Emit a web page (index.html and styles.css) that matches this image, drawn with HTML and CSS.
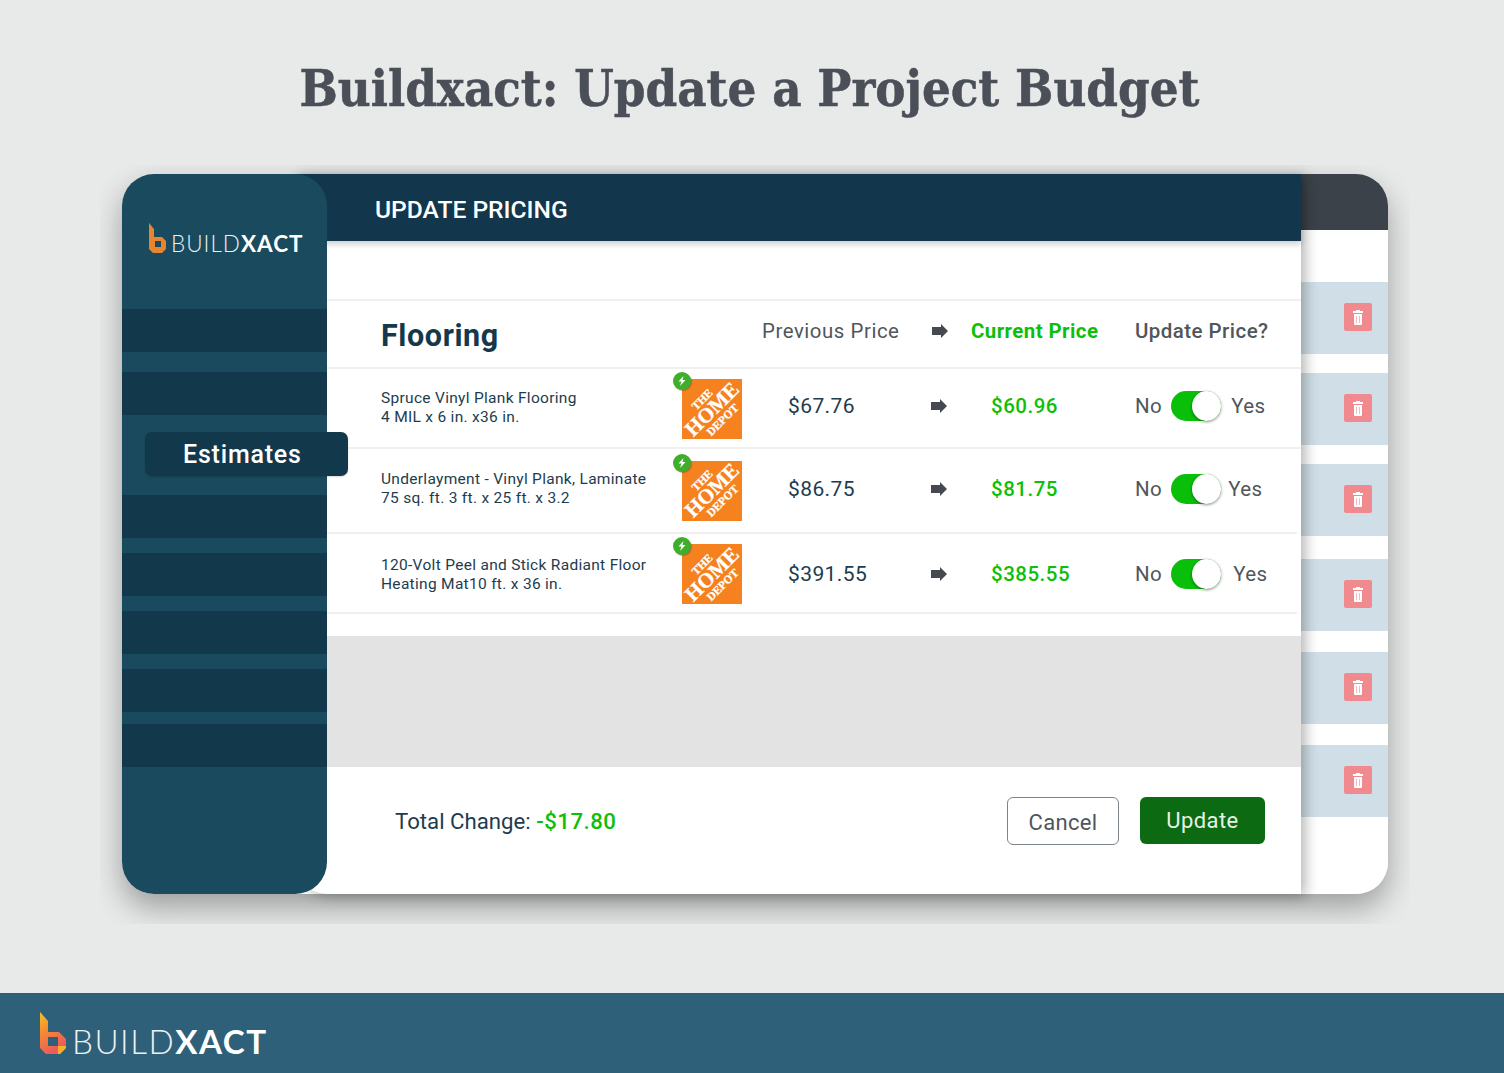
FILE: index.html
```html
<!DOCTYPE html>
<html lang="en">
<head>
	<meta charset="UTF-8">
	<title>Buildxact: Update a Project Budget</title>
	<link rel="stylesheet" href="styles.css">
</head>
<body>
	<h1 class="title">Buildxact: Update a Project Budget</h1>

	<div class="stage">
		<div class="app">
			<aside class="side">
				<div class="side_logo">
					<svg class="side_mark" width="19" height="31" viewBox="0 0 19 31"><path d="M1 0l5 6v8h8l4 4v8l-4 4H5l-4-4z" fill="#e8832f"/><rect x="7" y="18" width="6" height="6" fill="#1a4a5e"/></svg>
					<span class="word">BUILD<b>XACT</b></span>
				</div>
				<div class="side_bars">
					<div class="bar"></div>
					<div class="bar"></div>
					<div class="bar"></div>
					<div class="bar"></div>
					<div class="bar"></div>
					<div class="bar"></div>
					<div class="bar"></div>
					<div class="bar"></div>
				</div>
				<div class="pill">Estimates</div>
			</aside>

			<main class="main">
				<header class="main_top">UPDATE PRICING</header>
				<div class="main_gap"></div>

				<div class="row row_head">
					<h2 class="cat">Flooring</h2>
					<div class="col_price">Previous Price</div>
					<div class="col_arrow"><svg width="16" height="14" viewBox="0 0 16 14"><path d="M0 3h9V0l7 7-7 7v-3H0z" fill="#454a50"/></svg></div>
					<div class="col_now">Current Price</div>
					<div class="col_toggle">Update Price?</div>
				</div>

				<div class="row row_1">
					<p class="item">Spruce Vinyl Plank Flooring<br>4 MIL x 6 in. x36 in.</p>
					<div class="store">
						<div class="depot"><span>THE<br><em>HOME</em><br>DEPOT</span></div>
						<i class="bolt"><svg width="10" height="10" viewBox="0 0 10 10"><path d="M6.5 0L1.5 5.5h3L3 10l5.5-6h-3z" fill="#fff"/></svg></i>
					</div>
					<div class="col_price">$67.76</div>
					<div class="col_arrow"><svg width="16" height="14" viewBox="0 0 16 14"><path d="M0 3h9V0l7 7-7 7v-3H0z" fill="#454a50"/></svg></div>
					<div class="col_now">$60.96</div>
					<div class="col_toggle">No <span class="toggle"></span> <span class="yes">Yes</span></div>
				</div>

				<div class="row row_2">
					<p class="item">Underlayment - Vinyl Plank, Laminate<br>75 sq. ft. 3 ft. x 25 ft. x 3.2</p>
					<div class="store">
						<div class="depot"><span>THE<br><em>HOME</em><br>DEPOT</span></div>
						<i class="bolt"><svg width="10" height="10" viewBox="0 0 10 10"><path d="M6.5 0L1.5 5.5h3L3 10l5.5-6h-3z" fill="#fff"/></svg></i>
					</div>
					<div class="col_price">$86.75</div>
					<div class="col_arrow"><svg width="16" height="14" viewBox="0 0 16 14"><path d="M0 3h9V0l7 7-7 7v-3H0z" fill="#454a50"/></svg></div>
					<div class="col_now">$81.75</div>
					<div class="col_toggle">No <span class="toggle"></span> <span class="yes yes_near">Yes</span></div>
				</div>

				<div class="row row_3">
					<p class="item">120-Volt Peel and Stick Radiant Floor<br>Heating Mat10 ft. x 36 in.</p>
					<div class="store">
						<div class="depot"><span>THE<br><em>HOME</em><br>DEPOT</span></div>
						<i class="bolt"><svg width="10" height="10" viewBox="0 0 10 10"><path d="M6.5 0L1.5 5.5h3L3 10l5.5-6h-3z" fill="#fff"/></svg></i>
					</div>
					<div class="col_price">$391.55</div>
					<div class="col_arrow"><svg width="16" height="14" viewBox="0 0 16 14"><path d="M0 3h9V0l7 7-7 7v-3H0z" fill="#454a50"/></svg></div>
					<div class="col_now">$385.55</div>
					<div class="col_toggle">No <span class="toggle"></span> <span class="yes yes_far">Yes</span></div>
				</div>

				<div class="main_spacer"></div>
				<div class="main_grey"></div>

				<footer class="main_foot">
					<div class="total">Total Change: <span class="minus">-$17.80</span></div>
					<div class="btns">
						<button class="btn_cancel">Cancel</button>
						<button class="btn_update">Update</button>
					</div>
				</footer>
			</main>

			<div class="back">
				<div class="back_top"></div>
				<div class="back_rows">
					<div class="back_row"><span class="trash"><svg width="10" height="15" viewBox="0 0 10 15"><path d="M3 0h4v1h3v2H0V1h3zM1 4h8v10a1 1 0 0 1-1 1H2a1 1 0 0 1-1-1z" fill="#fff"/><path d="M3.5 6v7M6.5 6v7" stroke="#f6b9bc"/></svg></span></div>
					<div class="back_row"><span class="trash"><svg width="10" height="15" viewBox="0 0 10 15"><path d="M3 0h4v1h3v2H0V1h3zM1 4h8v10a1 1 0 0 1-1 1H2a1 1 0 0 1-1-1z" fill="#fff"/><path d="M3.5 6v7M6.5 6v7" stroke="#f6b9bc"/></svg></span></div>
					<div class="back_row"><span class="trash"><svg width="10" height="15" viewBox="0 0 10 15"><path d="M3 0h4v1h3v2H0V1h3zM1 4h8v10a1 1 0 0 1-1 1H2a1 1 0 0 1-1-1z" fill="#fff"/><path d="M3.5 6v7M6.5 6v7" stroke="#f6b9bc"/></svg></span></div>
					<div class="back_row"><span class="trash"><svg width="10" height="15" viewBox="0 0 10 15"><path d="M3 0h4v1h3v2H0V1h3zM1 4h8v10a1 1 0 0 1-1 1H2a1 1 0 0 1-1-1z" fill="#fff"/><path d="M3.5 6v7M6.5 6v7" stroke="#f6b9bc"/></svg></span></div>
					<div class="back_row"><span class="trash"><svg width="10" height="15" viewBox="0 0 10 15"><path d="M3 0h4v1h3v2H0V1h3zM1 4h8v10a1 1 0 0 1-1 1H2a1 1 0 0 1-1-1z" fill="#fff"/><path d="M3.5 6v7M6.5 6v7" stroke="#f6b9bc"/></svg></span></div>
					<div class="back_row"><span class="trash"><svg width="10" height="15" viewBox="0 0 10 15"><path d="M3 0h4v1h3v2H0V1h3zM1 4h8v10a1 1 0 0 1-1 1H2a1 1 0 0 1-1-1z" fill="#fff"/><path d="M3.5 6v7M6.5 6v7" stroke="#f6b9bc"/></svg></span></div>
				</div>
			</div>
		</div>
	</div>

	<footer class="page_foot">
		<svg class="foot_mark" width="27" height="43" viewBox="0 0 27 43">
			<defs><linearGradient id="gr" x1="0" y1="0" x2="0.4" y2="1"><stop offset="0" stop-color="#f6c21c"/><stop offset=".45" stop-color="#f58a36"/><stop offset="1" stop-color="#ec5a5a"/></linearGradient></defs>
			<path d="M0 0l8 9v11h11l7 7v9l-6 6H6l-6-6z" fill="url(#gr)"/>
			<path d="M18 34h8v2l-6 6h-2z" fill="#f5b12a"/>
			<rect x="8" y="25" width="10" height="9" fill="#2f607a"/>
		</svg>
		<span class="word foot_word">BUILD<b>XACT</b></span>
	</footer>
</body>
</html>
```

FILE: styles.css
```css
*{
	margin: 0;
	padding: 0;
	box-sizing: border-box;
}
body{
	width: 1504px;
	height: 1073px;
	overflow: hidden;
	background: #e8e9e9;
	font-family: Roboto, "Liberation Sans", sans-serif;
	display: flex;
	flex-direction: column;
}
.title{
	height: 165px;
	padding: 53px 5px 0 0;
	text-align: center;
	font-family: "DejaVu Serif Condensed", "DejaVu Serif", serif;
	font-size: 50.4px;
	line-height: 72px;
	font-weight: 700;
	color: #4a4f58;
	-webkit-text-stroke: .5px #4a4f58;
}
/* the shadow stops hard at the bottom in the picture, so clip it */
.stage{
	width: 1310px;
	height: 759px;
	margin-left: 100px;
	padding: 9px 22px 0;
	overflow: hidden;
}
.app{
	position: relative;
	display: flex;
	width: 1266px;
	height: 720px;
	border-radius: 32px;
	background: #fff;
	box-shadow: 0 14px 30px rgba(0,0,0,.32);
}

/* sidebar */
.side{
	flex: none;
	width: 205px;
	border-radius: 32px;
	background: #1a4a5e;
	position: relative;
	z-index: 2;
}
.side_logo{
	height: 135px;
	padding: 49px 0 0 26px;
	display: flex;
	align-items: flex-start;
	gap: 4px;
}
.word{
	font-family: Lato, "Open Sans", sans-serif;
	font-size: 22.5px;
	line-height: 24px;
	letter-spacing: 1px;
	color: #eef1f2;
	font-weight: 300;
	margin-top: 9px;
}
.word b{
	font-weight: 700;
	color: #fff;
}
.side_bars{
	display: flex;
	flex-direction: column;
}
.bar{
	height: 43px;
	background: #12384c;
	margin-bottom: 15px;
}
.bar:nth-child(1),.bar:nth-child(2){
	margin-bottom: 20px;
}
/* this one sits behind the Estimates pill */
.bar:nth-child(3){
	background: none;
	margin-bottom: 17px;
}
.bar:nth-child(7){
	margin-bottom: 12px;
}
.pill{
	position: absolute;
	left: 23px;
	top: 258px;
	width: 203px;
	height: 44px;
	border-radius: 7px;
	background: #12384c;
	color: #fff;
	font-size: 25px;
	font-weight: 500;
	letter-spacing: .8px;
	line-height: 46px;
	padding-left: 38px;
	box-shadow: 0 1px 2px rgba(0,0,0,.15);
}

/* middle panel, runs under the sidebar's round corners */
.main{
	flex: none;
	width: 1006px;
	margin-left: -32px;
	display: flex;
	flex-direction: column;
	background: #fff;
	position: relative;
	z-index: 1;
	border-radius: 0 0 0 32px;
	box-shadow: 4px 2px 14px rgba(0,0,0,.3);
}
.main_top{
	height: 67px;
	background: #12374c;
	color: #fff;
	font-size: 24.6px;
	font-weight: 500;
	line-height: 71px;
	padding-left: 80px;
	box-shadow: 0 3px 6px rgba(0,0,0,.2);
}
.main_gap{
	height: 58px;
}
.row{
	display: flex;
	align-items: center;
	padding-left: 86px;
	border-top: 2px solid #f0f0f0;
}
.row_head{
	height: 68px;
}
.row_1{
	height: 80px;
	padding-bottom: 1px;
}
.row_2{
	height: 85px;
	padding-bottom: 3px;
}
.row_3{
	height: 82px;
	padding-top: 2px;
	border-bottom: 2px solid #f0f0f0;
	margin-right: 4px;
}
.cat{
	width: 381px;
	font-size: 30.5px;
	font-weight: 700;
	color: #14384c;
	letter-spacing: .6px;
	padding-top: 2px;
}
.item{
	width: 295px;
	font-size: 15.5px;
	line-height: 19px;
	letter-spacing: .3px;
	color: #1e3c4e;
}
.row_3 .item{
	padding-top: 2px;
}
.store{
	position: relative;
	width: 86px;
	height: 60px;
	padding-left: 6px;
	margin-top: 3px;
}
.row_3 .store{
	margin-top: 0;
}
.depot{
	width: 60px;
	height: 60px;
	background: #f5821f;
	display: flex;
	align-items: center;
	justify-content: center;
}
.depot span{
	transform: rotate(-45deg);
	font-family: "Liberation Serif", serif;
	font-weight: 700;
	color: #fff;
	font-size: 11.5px;
	line-height: 12px;
	text-align: center;
	white-space: nowrap;
	-webkit-text-stroke: .3px #fff;
}
.depot em{
	font-style: normal;
	font-size: 21px;
	line-height: 17px;
}
.bolt{
	position: absolute;
	left: -3px;
	top: -7px;
	width: 18px;
	height: 18px;
	border-radius: 50%;
	background: #3fae2a;
	display: flex;
	align-items: center;
	justify-content: center;
	box-shadow: 1px 1px 1px rgba(130,90,50,.6);
}
.col_price{
	width: 169px;
	padding-left: 26px;
	font-size: 21px;
	letter-spacing: .4px;
	color: #1e3c4e;
}
.col_arrow{
	width: 40px;
	display: flex;
	align-items: center;
}
.col_now{
	width: 164px;
	padding-left: 20px;
	font-size: 20.5px;
	font-weight: 500;
	letter-spacing: .5px;
	color: #0ebf0a;
}
.col_toggle{
	display: flex;
	align-items: center;
	gap: 9px;
	font-size: 20.5px;
	letter-spacing: .4px;
	color: #50565c;
}
.row_1 .col_price,.row_1 .col_arrow,.row_1 .col_now,.row_1 .col_toggle{
	padding-bottom: 4px;
}
.yes{
	margin-left: 1px;
}
.yes_near{
	margin-left: -2px;
}
.yes_far{
	margin-left: 3px;
}
.toggle{
	position: relative;
	width: 50px;
	height: 30px;
	border-radius: 15px;
	background: #0abf0a;
}
.toggle::after{
	content: "";
	position: absolute;
	right: 0;
	top: 0;
	width: 29px;
	height: 30px;
	border-radius: 50%;
	background: #fff;
	box-shadow: 0 1px 3px rgba(0,0,0,.45);
}

/* header row has its own column starts */
.row_head .col_price,.row_head .col_now,.row_head .col_toggle,.row_head .col_arrow{
	padding-bottom: 6px;
}
.row_head .col_price{
	width: 170px;
	padding-left: 0;
	font-size: 20.4px;
	letter-spacing: .55px;
	color: #50565c;
}
.row_head .col_arrow{
	width: 39px;
}
.row_head .col_now{
	padding-left: 0;
	font-size: 20.4px;
	font-weight: 700;
	letter-spacing: .45px;
}
.row_head .col_toggle{
	font-weight: 500;
	letter-spacing: .45px;
}
.main_spacer{
	height: 22px;
}
.main_grey{
	height: 131px;
	background: #e3e3e3;
}
.main_foot{
	flex: 1;
	display: flex;
	align-items: center;
	justify-content: space-between;
	padding: 0 36px 20px 100px;
}
.total{
	font-size: 22.2px;
	color: #1e3c4e;
}
.minus{
	color: #0ebf0a;
	font-weight: 500;
	letter-spacing: .5px;
}
.btns{
	display: flex;
	gap: 21px;
	align-items: center;
}
.btn_cancel,.btn_update{
	font-family: Roboto, "Liberation Sans", sans-serif;
	font-size: 22px;
	border-radius: 6px;
}
.btn_cancel{
	width: 112px;
	height: 48px;
	padding-top: 3px;
	letter-spacing: .3px;
	background: #fff;
	border: 1px solid #7d8489;
	color: #50565c;
}
.btn_update{
	width: 125px;
	height: 47px;
	letter-spacing: .4px;
	background: #0b6a12;
	border: none;
	color: #e6f2e6;
}

/* panel peeking out behind */
.back{
	flex: none;
	width: 87px;
	border-radius: 0 32px 32px 0;
	overflow: hidden;
	background: #fff;
}
.back_top{
	height: 56px;
	background: #3c424a;
}
.back_rows{
	padding-top: 52px;
	display: flex;
	flex-direction: column;
	gap: 19px;
}
.back_row{
	height: 72px;
	background: #d0dfe7;
	display: flex;
	align-items: center;
	padding: 0 0 2px 43px;
}
.back_row:nth-child(3){
	margin-bottom: 4px;
}
.back_row:nth-child(4),.back_row:nth-child(5){
	margin-bottom: 2px;
}
.trash{
	width: 28px;
	height: 28px;
	background: #f08a8f;
	border-radius: 2px;
	display: flex;
	align-items: center;
	justify-content: center;
}

/* bottom band */
.page_foot{
	margin-top: auto;
	height: 80px;
	background: #2f607a;
	display: flex;
	align-items: flex-start;
	padding: 19px 0 0 40px;
	gap: 5px;
}
.foot_word{
	font-size: 33.2px;
	line-height: 36px;
	margin-top: 11px;
	letter-spacing: 1.5px;
}
```
